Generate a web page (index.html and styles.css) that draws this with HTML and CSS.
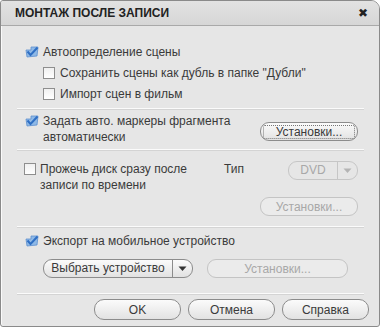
FILE: index.html
```html
<!DOCTYPE html>
<html>
<head>
<meta charset="utf-8">
<link rel="stylesheet" href="styles.css">
</head>
<body>
<div class="dialog">
  <div class="titlebar">
    <span class="title">МОНТАЖ ПОСЛЕ ЗАПИСИ</span>
    <span class="close">✖</span>
  </div>
  <div class="content">
    <section class="group g1">
      <label class="chk"><span class="box checked"><svg viewBox="0 0 14 12" width="14" height="12"><path d="M1 4 L6 4 L6 1 L13 1 L12 10 L2 11 Z" fill="#8fb9e6" stroke="#5d8fcf" stroke-width="0.8"/><path d="M2.5 5.5 L5.5 9 L12.5 1.5" fill="none" stroke="#2f6fc4" stroke-width="2"/></svg></span>Автоопределение сцены</label>
      <label class="chk sub"><span class="box"></span>Сохранить сцены как дубль в папке "Дубли"</label>
      <label class="chk sub"><span class="box"></span>Импорт сцен в фильм</label>
    </section>
    <section class="group g2">
      <label class="chk"><span class="box checked"><svg viewBox="0 0 14 12" width="14" height="12"><path d="M1 4 L6 4 L6 1 L13 1 L12 10 L2 11 Z" fill="#8fb9e6" stroke="#5d8fcf" stroke-width="0.8"/><path d="M2.5 5.5 L5.5 9 L12.5 1.5" fill="none" stroke="#2f6fc4" stroke-width="2"/></svg></span><span>Задать авто. маркеры фрагмента<br>автоматически</span></label>
      <button class="btn set1"><span>Установки...</span></button>
    </section>
    <section class="group g3">
      <div class="row3">
        <label class="chk"><span class="box"></span><span>Прожечь диск сразу после<br>записи по времени</span></label>
        <span class="tip">Тип</span>
        <span class="combo"><span class="cv">DVD</span><span class="ca"><svg width="9" height="6" viewBox="0 0 9 6"><path d="M0.5 0.5 H8.5 L4.5 5 Z" fill="#b4b4b4"/></svg></span></span>
      </div>
      <button class="btn dis set2">Установки...</button>
    </section>
    <section class="group g4">
      <label class="chk"><span class="box checked"><svg viewBox="0 0 14 12" width="14" height="12"><path d="M1 4 L6 4 L6 1 L13 1 L12 10 L2 11 Z" fill="#8fb9e6" stroke="#5d8fcf" stroke-width="0.8"/><path d="M2.5 5.5 L5.5 9 L12.5 1.5" fill="none" stroke="#2f6fc4" stroke-width="2"/></svg></span>Экспорт на мобильное устройство</label>
      <div class="row4">
        <span class="split"><span class="sv">Выбрать устройство</span><span class="sa"><svg width="9" height="6" viewBox="0 0 9 6"><path d="M0.5 0.5 H8.5 L4.5 5 Z" fill="#333"/></svg></span></span>
        <button class="btn dis set3">Установки...</button>
      </div>
    </section>
    <div class="footer">
      <button class="btn fb">OK</button>
      <button class="btn fb">Отмена</button>
      <button class="btn fb">Справка</button>
    </div>
  </div>
</div>
</body>
</html>
```
FILE: styles.css
```css
html, body { margin: 0; padding: 0; background: #fff; }
body { font-family: "Liberation Sans", Arial, sans-serif; font-size: 12px; color: #3a3a3a; }
.dialog {
  width: 378px; height: 325px;
  border: 1px solid #8a8a8a;
  border-radius: 3px 9px 3px 3px;
  background: #e6e6e6;
  overflow: hidden;
  display: flex; flex-direction: column;
  box-shadow: inset 1px 0 0 #fafafa;
}
.titlebar {
  height: 24px; flex: none;
  display: flex; align-items: center; justify-content: space-between;
  padding: 0 11px 0 14px;
  background: linear-gradient(#e2e2e2, #d6d6d6);
  border-bottom: 1px solid #a9a9a9;
}
.title { font-weight: bold; font-size: 12px; color: #222; }
.close { font-size: 12px; color: #222; }
.content { flex: 1; display: flex; flex-direction: column; padding: 0 15px 0 16px; }
.group { border-bottom: 1px solid #fbfbfb; box-shadow: 0 1px 0 #d4d4d4; flex: none; }
.chk { display: flex; align-items: flex-start; gap: 4px; line-height: 16px; }
.box { width: 10px; height: 10px; border: 1px solid #8e8e8e; background: linear-gradient(#f0f0f0, #fff); flex: none; margin-top: 2px; }
.box.checked { border: none; background: none; width: 14px; height: 12px; margin-top: 2px; margin-left: 1px; }
.box svg { display: block; }
.g1 { height: 64px; padding: 18px 0 0 7px; display: flex; flex-direction: column; gap: 5px; }
.chk.sub { margin-left: 19px; gap: 5px; }
.g2 { height: 36px; padding: 4px 0 0 7px; display: flex; justify-content: space-between; align-items: flex-start; }
.btn {
  font-family: inherit; font-size: 12px; font-weight: normal; color: #3a3a3a;
  border: 1px solid #8c8c8c; border-radius: 9px;
  background: linear-gradient(#fbfbfb, #e2e2e2);
  height: 19px; padding: 0; cursor: default; flex: none;
}
.btn.dis { color: #a8a8a8; border-color: #c4c4c4; background: #ebebeb; }
.set1 { width: 98px; margin-top: 9px; margin-right: 6px; padding: 2px; }
.set1 span { display: block; border: 1px dotted #777; border-radius: 2px; line-height: 12px; }
.g3 { height: 65px; padding: 11px 0 0 7px; display: flex; flex-direction: column; align-items: flex-end; }
.row3 { display: flex; align-self: stretch; align-items: flex-start; }
.row3 .chk { flex: 1; }
.tip { line-height: 16px; margin-right: 44px; }
.combo { display: flex; height: 19px; width: 70px; border: 1px solid #c6c6c6; border-radius: 9px; margin-right: 6px; box-sizing: border-box; color: #a8a8a8; }
.combo .cv { flex: 1; text-align: center; line-height: 17px; }
.combo .ca { width: 19px; border-left: 1px solid #c6c6c6; display: flex; align-items: center; justify-content: center; }
.set2 { width: 98px; margin-right: 6px; margin-top: 4px; }
.g4 { height: 60px; padding: 6px 0 0 7px; display: flex; flex-direction: column; gap: 10px; }
.row4 { display: flex; align-items: center; padding-left: 19px; }
.split { display: flex; height: 19px; border: 1px solid #8c8c8c; border-radius: 9px; background: linear-gradient(#fbfbfb, #e2e2e2); box-sizing: border-box; width: 150px; flex: none; }
.split .sv { flex: 1; text-align: center; line-height: 17px; border-right: 1px solid #8c8c8c; }
.split .sa { width: 19px; display: flex; align-items: center; justify-content: center; }
.set3 { width: 141px; margin-left: 14px; }
.footer { display: flex; justify-content: flex-end; gap: 7px; padding-top: 5px; margin-right: -5px; }
.fb { width: 87px; height: 21px; border-radius: 10px; }
```
